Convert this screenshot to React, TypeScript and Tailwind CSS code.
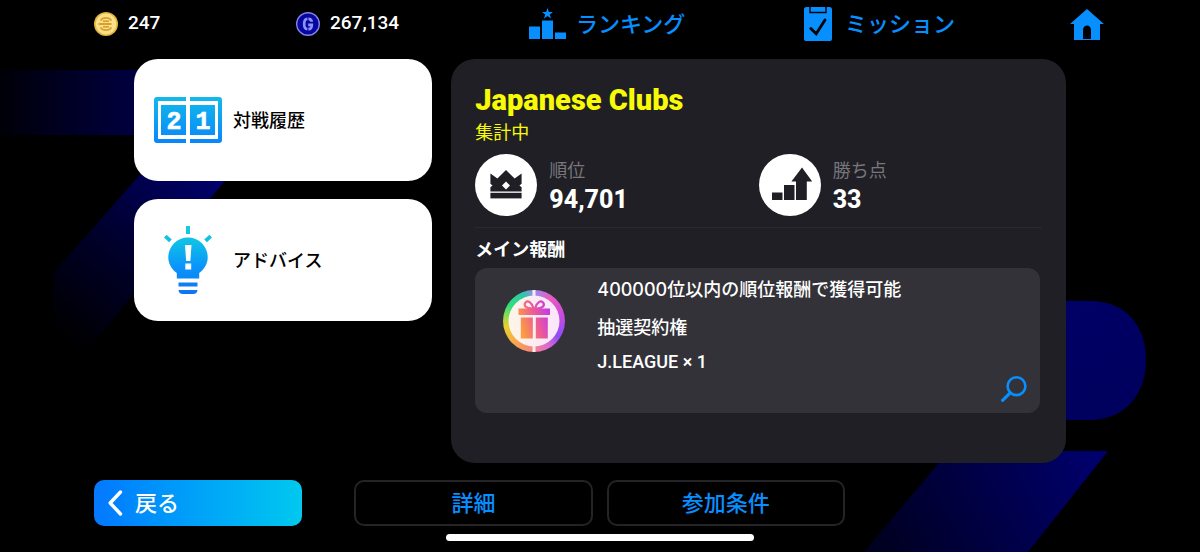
import type { ReactNode } from 'react';

function Background() {
  return (
    <svg
      className="absolute inset-0 h-full w-full"
      viewBox="0 0 1200 552"
      preserveAspectRatio="none"
      aria-hidden="true"
    >
      <defs>
        <linearGradient id="band" x1="0" y1="0" x2="240" y2="0" gradientUnits="userSpaceOnUse">
          <stop offset="0" stopColor="#000008" />
          <stop offset="1" stopColor="#00006a" />
        </linearGradient>
        <linearGradient id="slash" x1="215" y1="180" x2="70" y2="345" gradientUnits="userSpaceOnUse">
          <stop offset="0" stopColor="#00006a" />
          <stop offset="0.5" stopColor="#00002e" />
          <stop offset="1" stopColor="#000000" />
        </linearGradient>
        <linearGradient id="pill" x1="1066" y1="301" x2="1146" y2="419" gradientUnits="userSpaceOnUse">
          <stop offset="0" stopColor="#000066" />
          <stop offset="1" stopColor="#00005c" />
        </linearGradient>
        <linearGradient id="tail" x1="1090" y1="450" x2="880" y2="560" gradientUnits="userSpaceOnUse">
          <stop offset="0" stopColor="#00006c" />
          <stop offset="1" stopColor="#00001f" />
        </linearGradient>
      </defs>
      <path d="M0 70H240V135H0z" fill="url(#band)" />
      <path d="M175 135H262L78 362H54V272z" fill="url(#slash)" />
      <path d="M1000 301H1090C1126 301 1146 326 1146 360C1146 395 1124 420 1090 420H1000z" fill="url(#pill)" />
      <path d="M949 451H1108L1028 552H864z" fill="url(#tail)" />
    </svg>
  );
}

function CoinIcon() {
  return (
    <svg className="h-6 w-6 shrink-0" viewBox="0 0 24 24" aria-hidden="true">
      <circle cx="12" cy="12" r="12" fill="#e3b640" />
      <circle cx="12" cy="12" r="10.4" fill="#fbe08a" />
      <g fill="none" stroke="#d9a02c" strokeWidth="1.7">
        <path d="M6.6 8.6C8.6 4.9 15.4 4.9 17.4 8.6" />
        <path d="M9 9.2h6" />
        <path d="M4.5 12h13" strokeWidth="2" />
        <path d="M9 14.8h6" />
        <path d="M6.6 15.4C8.6 19.1 15.4 19.1 17.4 15.4" />
      </g>
    </svg>
  );
}

function GpIcon() {
  return (
    <svg className="h-6 w-6 shrink-0" viewBox="0 0 24 24" aria-hidden="true">
      <circle cx="12" cy="12" r="11.3" fill="#0606a0" stroke="#8583e8" strokeWidth="1.4" />
      <g fill="none" stroke="#8f92f5" strokeWidth="2.7">
        <path d="M11.4 6.9C8.6 7.1 8.2 8.6 8.2 12S8.6 16.9 11.4 17.1" />
        <path d="M12.4 6.9C14.6 7 15.6 7.9 15.7 9.8" />
        <path d="M12.4 17.1C15 17 15.8 16.2 15.8 12.9H12.2" />
      </g>
    </svg>
  );
}

function RankingIcon() {
  return (
    <svg className="h-[31px] w-[37px] shrink-0" viewBox="0 0 37 31" fill="#078fff" aria-hidden="true">
      <path d="M18.5 0L19.9 4H24L20.8 6.5L22 10.5L18.5 8.1L15 10.5L16.2 6.5L13 4H17.1z" />
      <path d="M0 18.5H11V31H0zM13 12.5H24V31H13zM26 24.5H37V31H26z" />
    </svg>
  );
}

function MissionIcon() {
  return (
    <svg className="h-[34px] w-7 shrink-0" viewBox="0 0 28 34" aria-hidden="true">
      <rect width="28" height="34" rx="2.6" fill="#078fff" />
      <path d="M6 0V5.5H22V0" fill="#078fff" stroke="#000" strokeWidth="1.4" />
      <path d="M6.8 21.5L12.2 26.8L21 13" fill="none" stroke="#000" strokeWidth="2.8" strokeLinecap="round" />
    </svg>
  );
}

function HomeIcon() {
  return (
    <svg className="h-8 w-[34px]" viewBox="0 0 34 32" fill="#078fff" aria-hidden="true">
      <path d="M17 1L34 16H30V32H21V22C21 16 13 16 13 22V32H4V16H0z" />
      <path d="M13 31H21V32H13z" />
    </svg>
  );
}

function ScoreIcon() {
  return (
    <svg className="h-[46px] w-[68px]" viewBox="0 0 68 46" aria-hidden="true">
      <defs>
        <linearGradient id="score" x1="0" y1="0" x2="0" y2="46" gradientUnits="userSpaceOnUse">
          <stop offset="0" stopColor="#12b9ea" />
          <stop offset="1" stopColor="#0a86fb" />
        </linearGradient>
      </defs>
      <g fill="url(#score)">
        <path d="M3 0H32V4H4V42H32V46H3Q0 46 0 43V3Q0 0 3 0z" />
        <path d="M36 0H65Q68 0 68 3V43Q68 46 65 46H36V42H64V4H36z" />
        <path d="M7 8H32V38H7zM36 8H61V38H36z" />
      </g>
      <g
        fill="#fff"
        textAnchor="middle"
        className="font-['Liberation_Mono',monospace] text-[25px] font-bold"
        stroke="#fff"
        strokeWidth="0.6"
      >
        <text x="20" y="31.5">2</text>
        <text x="49" y="31.5">1</text>
      </g>
    </svg>
  );
}

function BulbIcon() {
  return (
    <svg className="h-[68px] w-[68px]" viewBox="0 0 68 68" aria-hidden="true">
      <defs>
        <linearGradient id="bulb" x1="0" y1="0" x2="0" y2="68" gradientUnits="userSpaceOnUse">
          <stop offset="0" stopColor="#1accd9" />
          <stop offset="0.25" stopColor="#0fbde9" />
          <stop offset="0.6" stopColor="#0a95fa" />
          <stop offset="1" stopColor="#1073f2" />
        </linearGradient>
      </defs>
      <g fill="url(#bulb)">
        <path d="M32 0H36V8H32zM10 11.5L12.6 8.7L17.8 13.4L15 16.3zM58 11.5L55.4 8.7L50.2 13.4L53 16.3z" />
        <path d="M34 11.5A19.7 19.7 0 0 1 53.7 31.2C53.7 38.5 49.6 43.5 45.2 47V52.5H22.8V47C18.4 43.5 14.3 38.5 14.3 31.2A19.7 19.7 0 0 1 34 11.5z" />
        <path d="M24.5 56.5H43.5V60.5H24.5zM24.5 64H43.5Q43.2 68 39 68H29Q24.8 68 24.5 64z" />
      </g>
      <path d="M31 19H37.5L36.4 35H32.1zM31.3 37.6H37.2V43.4H31.3z" fill="#fff" />
    </svg>
  );
}

function CrownIcon() {
  return (
    <svg className="h-[62px] w-[62px] shrink-0" viewBox="0 0 62 62" aria-hidden="true">
      <circle cx="31" cy="31" r="31" fill="#fff" />
      <path
        d="M15.4 19.5L22.4 24.5L31 16L39.6 24.5L46.6 19.5V29.8L44.4 31.5L46.6 33.2V37.5H15.4V33.2L17.6 31.5L15.4 29.8z"
        fill="#201f25"
      />
      <path d="M15.4 38.8H46.6V44.4H15.4z" fill="#201f25" />
      <path d="M31 27.5L35 31.5L31 35.5L27 31.5z" fill="#fff" />
    </svg>
  );
}

function PointsIcon() {
  return (
    <svg className="h-[62px] w-[62px] shrink-0" viewBox="0 0 62 62" aria-hidden="true">
      <circle cx="31" cy="31" r="31" fill="#fff" />
      <path
        d="M13 38.5H23.5V46H13zM25 31H35.5V46H25zM43 13.5L53.2 27.5H47.8V46H37V27.5H32.4z"
        fill="#201f25"
      />
    </svg>
  );
}

function GiftIcon() {
  return (
    <div className="relative h-[62px] w-[62px] shrink-0 rounded-full bg-[conic-gradient(#9a8cf0,#e85ac0_10%,#c94be0_22%,#8d4dfb_34%,#e06ad0_42%,#f78a7a_52%,#f7a94a_62%,#e8d22c_72%,#2fe07a_84%,#2fc6a8_94%,#9a8cf0)]">
      <svg className="absolute inset-0 h-full w-full" viewBox="0 0 62 62" aria-hidden="true">
        <defs>
          <linearGradient id="gift" x1="16" y1="34" x2="46" y2="24" gradientUnits="userSpaceOnUse">
            <stop offset="0" stopColor="#fba03c" />
            <stop offset="0.5" stopColor="#f0608c" />
            <stop offset="1" stopColor="#c83ce0" />
          </linearGradient>
          <linearGradient id="disc" x1="6" y1="0" x2="56" y2="0" gradientUnits="userSpaceOnUse">
            <stop offset="0" stopColor="#fdf5e8" />
            <stop offset="1" stopColor="#fae6fb" />
          </linearGradient>
        </defs>
        <circle cx="31" cy="31" r="25.5" fill="url(#disc)" />
        <path d="M29.5 0H32.5V6H29.5zM29.5 56H32.5V62H29.5z" fill="#fbe9f2" />
        <path d="M15.5 18.5H47V25H15.5zM17.8 27.5H29.8V48.5H17.8zM32.8 27.5H44.8V48.5H32.8z" fill="url(#gift)" />
        <g fill="none" stroke="url(#gift)" strokeWidth="2.2">
          <path d="M30.5 18.5C23 19 20.5 15.5 22.2 12.8C24.5 9.5 29 12.5 30.5 18.5z" />
          <path d="M32 18.5C39.5 19 42 15.5 40.3 12.8C38 9.5 33.5 12.5 32 18.5z" />
        </g>
      </svg>
    </div>
  );
}

function Currency({ icon, value }: { icon: ReactNode; value: string }) {
  return (
    <div className="flex items-center gap-2.5 font-['Roboto','Noto_Sans_CJK_JP',sans-serif] text-[19px] font-medium text-white">
      {icon}
      <span>{value}</span>
    </div>
  );
}

function NavLink({ icon, label, gap }: { icon: ReactNode; label: string; gap: string }) {
  return (
    <a href="#" className={`flex items-center text-[22px] font-medium whitespace-nowrap text-[#078fff] ${gap}`}>
      {icon}
      <span className="pb-[3px]">{label}</span>
    </a>
  );
}

function MenuCard({ icon, label }: { icon: ReactNode; label: string }) {
  return (
    <button
      type="button"
      className="flex h-[122px] w-full items-center gap-[11px] rounded-3xl bg-white pl-5 text-left text-lg font-medium text-black"
    >
      {icon}
      <span className="pb-[3px]">{label}</span>
    </button>
  );
}

function Stat({ icon, label, value }: { icon: ReactNode; label: string; value: string }) {
  return (
    <div className="flex items-center gap-3">
      {icon}
      <dl>
        <dt className="text-lg leading-[29px] text-[#77767c]">{label}</dt>
        <dd className="font-['Roboto',sans-serif] text-[25px] leading-8 font-extrabold text-white">{value}</dd>
      </dl>
    </div>
  );
}

function OutlineButton({ label }: { label: string }) {
  return (
    <button
      type="button"
      className="h-[46px] rounded-[10px] border-2 border-[#242427] bg-black pb-1 text-[22px] font-medium text-[#078fff]"
    >
      {label}
    </button>
  );
}

export default function App() {
  return (
    <div
      lang="ja"
      className="relative min-h-screen overflow-hidden bg-black font-['Noto_Sans_CJK_JP',sans-serif]"
    >
      <Background />
      <div className="relative flex min-h-screen flex-col">
        <header className="grid h-[47px] grid-cols-[202fr_233fr_275fr_266fr_34px] items-center pr-24 pl-[94px]">
          <Currency icon={<CoinIcon />} value="247" />
          <Currency icon={<GpIcon />} value="267,134" />
          <NavLink icon={<RankingIcon />} label="ランキング" gap="gap-2.5" />
          <NavLink icon={<MissionIcon />} label="ミッション" gap="gap-[13px]" />
          <a href="#" aria-label="ホーム" className="flex">
            <HomeIcon />
          </a>
        </header>

        <main className="mt-3 grid grid-cols-[298fr_614fr] items-start gap-[19px] px-[134px]">
          <nav className="flex flex-col gap-[18px]">
            <MenuCard icon={<ScoreIcon />} label="対戦履歴" />
            <MenuCard icon={<BulbIcon />} label="アドバイス" />
          </nav>

          <section className="rounded-3xl bg-[#201f25] px-6 pt-6 pb-[50px]">
            <h1 className="font-['Roboto',sans-serif] text-[29px] leading-[35px] font-black text-[#f8fb05]">
              Japanese Clubs
            </h1>
            <p className="text-lg leading-[26px] text-[#f8fb05]">集計中</p>
            <div className="mt-2.5 grid grid-cols-2">
              <Stat icon={<CrownIcon />} label="順位" value="94,701" />
              <Stat icon={<PointsIcon />} label="勝ち点" value="33" />
            </div>
            <hr className="mt-[11px] border-[#2a292f]" />
            <h2 className="text-lg leading-10 font-bold text-white">メイン報酬</h2>
            <div className="mr-0.5 flex items-start rounded-xl bg-[#333238] pr-3 pl-7">
              <div className="mt-[22px]">
                <GiftIcon />
              </div>
              <div className="mt-0.5 flex-1 pb-9 pl-8 font-['Inter','Noto_Sans_CJK_JP',sans-serif] text-lg font-medium text-white">
                <p className="leading-10">400000位以内の順位報酬で獲得可能</p>
                <p className="leading-9">抽選契約権</p>
                <p className="font-['Roboto',sans-serif] leading-[31px]">J.LEAGUE × 1</p>
              </div>
              <button type="button" aria-label="報酬の詳細" className="mb-2.5 self-end">
                <svg className="h-7 w-7" viewBox="0 0 28 28" fill="none" stroke="#078fff" aria-hidden="true">
                  <circle cx="16.5" cy="11.2" r="8.9" strokeWidth="2.6" />
                  <path d="M10.2 17.8L2.6 25.4" strokeWidth="3.2" strokeLinecap="round" />
                </svg>
              </button>
            </div>
          </section>
        </main>

        <footer className="mt-[17px] grid grid-cols-[208fr_490fr] gap-[52px] pr-[355px] pl-[94px]">
          <button
            type="button"
            className="flex h-[46px] items-center gap-3 rounded-[10px] bg-linear-to-r from-[#0778ff] to-[#04c8ee] pl-3.5 text-[22px] font-medium text-white"
          >
            <svg
              className="h-[26px] w-[15px]"
              viewBox="0 0 15 26"
              fill="none"
              stroke="#fff"
              strokeWidth="3.4"
              strokeLinecap="round"
              strokeLinejoin="round"
              aria-hidden="true"
            >
              <path d="M12.5 2L2.2 13L12.5 24" />
            </svg>
            <span className="pb-[3px]">戻る</span>
          </button>
          <div className="grid grid-cols-2 gap-3.5">
            <OutlineButton label="詳細" />
            <OutlineButton label="参加条件" />
          </div>
        </footer>
        <div className="mx-auto mt-2 h-[7px] w-[308px] rounded-full bg-white" />
      </div>
    </div>
  );
}
